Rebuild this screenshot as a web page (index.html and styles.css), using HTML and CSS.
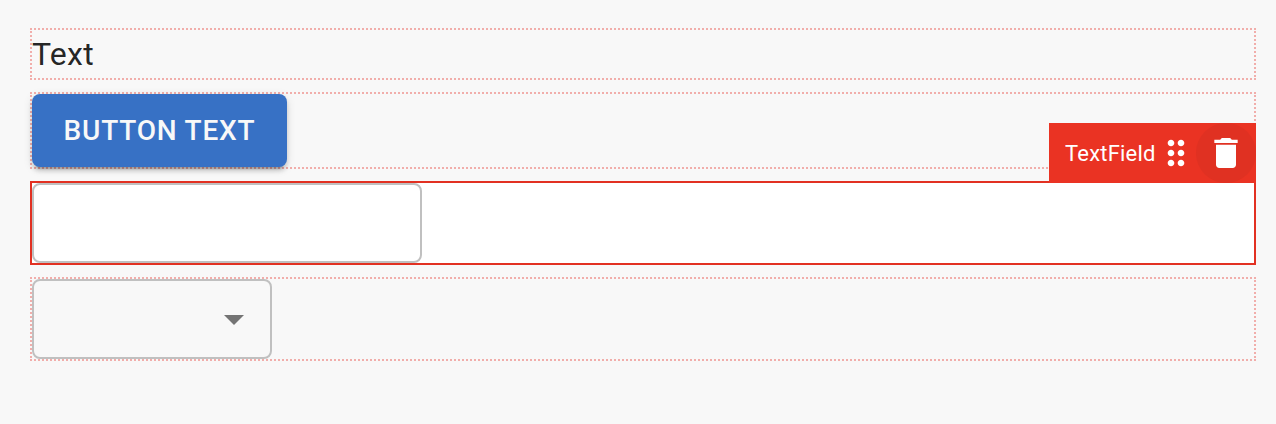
FILE: index.html
```html
<!DOCTYPE html>
<html lang="en">
<head>
<meta charset="utf-8">
<title>Page editor</title>
<link rel="stylesheet" href="styles.css">
</head>
<body>
<main class="canvas">
  <div class="slot slot-text"><span class="text">Text</span></div>
  <div class="slot"><button class="button" type="button">Button Text</button></div>
  <div class="slot slot-selected">
    <div class="toolbar">
      <span class="toolbar-label">TextField</span>
      <svg class="icon" viewBox="0 0 24 24"><path d="M11 18c0 1.1-.9 2-2 2s-2-.9-2-2 .9-2 2-2 2 .9 2 2zm-2-8c-1.1 0-2 .9-2 2s.9 2 2 2 2-.9 2-2-.9-2-2-2zm0-6c-1.1 0-2 .9-2 2s.9 2 2 2 2-.9 2-2-.9-2-2-2zm6 4c1.1 0 2-.9 2-2s-.9-2-2-2-2 .9-2 2 .9 2 2 2zm0 2c-1.1 0-2 .9-2 2s.9 2 2 2 2-.9 2-2-.9-2-2-2zm0 6c-1.1 0-2 .9-2 2s.9 2 2 2 2-.9 2-2-.9-2-2-2z"/></svg>
      <span class="delete"><svg class="icon" viewBox="0 0 24 24"><path d="M6 19c0 1.100.9 2 2 2h8c1.100 0 2-.9 2-2V7H6v12zM19 4h-3.500l-1-1h-5l-1 1H5v2h14V4z"/></svg></span>
    </div>
    <div class="field"></div>
  </div>
  <div class="slot">
    <div class="field select"><svg class="icon arrow" viewBox="0 0 24 24"><path d="M7 10l5 5 5-5z"/></svg></div>
  </div>
</main>
</body>
</html>
```

FILE: styles.css
```css
* { box-sizing: border-box; }
body {
  margin: 0;
  background: #f8f8f8;
  color: rgba(0, 0, 0, 0.87);
  font-family: Roboto, "Liberation Sans", sans-serif;
}
.canvas {
  display: grid;
  gap: 12px;
  padding: 28px 20px 0 30px;
}
.slot {
  position: relative;
  display: flex;
  border: 2px dotted #f1aeab;
}
.slot-text { height: 52px; }
.text {
  font-size: 32px;
  line-height: 48px;
  letter-spacing: 0.3px;
}
.button {
  width: 255px;
  height: 73px;
  padding: 12px 0;
  border: 0;
  border-radius: 8px;
  background: #3771c5;
  color: #f8f8f8;
  font: 500 28px/49px Roboto, "Liberation Sans", sans-serif;
  letter-spacing: 0.8px;
  text-transform: uppercase;
  box-shadow: 0 6px 2px -4px rgba(0, 0, 0, 0.2), 0 4px 4px rgba(0, 0, 0, 0.14), 0 2px 10px rgba(0, 0, 0, 0.12);
}
.slot-selected {
  border: 2px solid #e23122;
  background: #fff;
}
.field {
  width: 390px;
  height: 80px;
  border: 2px solid #c0c0c0;
  border-radius: 8px;
}
.select {
  display: flex;
  align-items: center;
  justify-content: flex-end;
  width: 240px;
  padding-right: 12px;
}
.icon {
  display: block;
  flex: none;
  width: 40px;
  height: 40px;
  fill: currentColor;
}
.arrow {
  width: 48px;
  height: 48px;
  color: #747474;
}
.toolbar {
  position: absolute;
  right: -2px;
  bottom: 80px;
  display: flex;
  align-items: center;
  width: 207px;
  height: 60px;
  padding-left: 16px;
  background: #ea3323;
  color: #fff;
}
.toolbar-label {
  width: 91px;
  padding-top: 2px;
  font-size: 22px;
  line-height: 32px;
  letter-spacing: 0.2px;
  white-space: nowrap;
}
.delete {
  display: flex;
  align-items: center;
  justify-content: center;
  width: 60px;
  height: 60px;
  border-radius: 50%;
  background: #e03122;
}
```
